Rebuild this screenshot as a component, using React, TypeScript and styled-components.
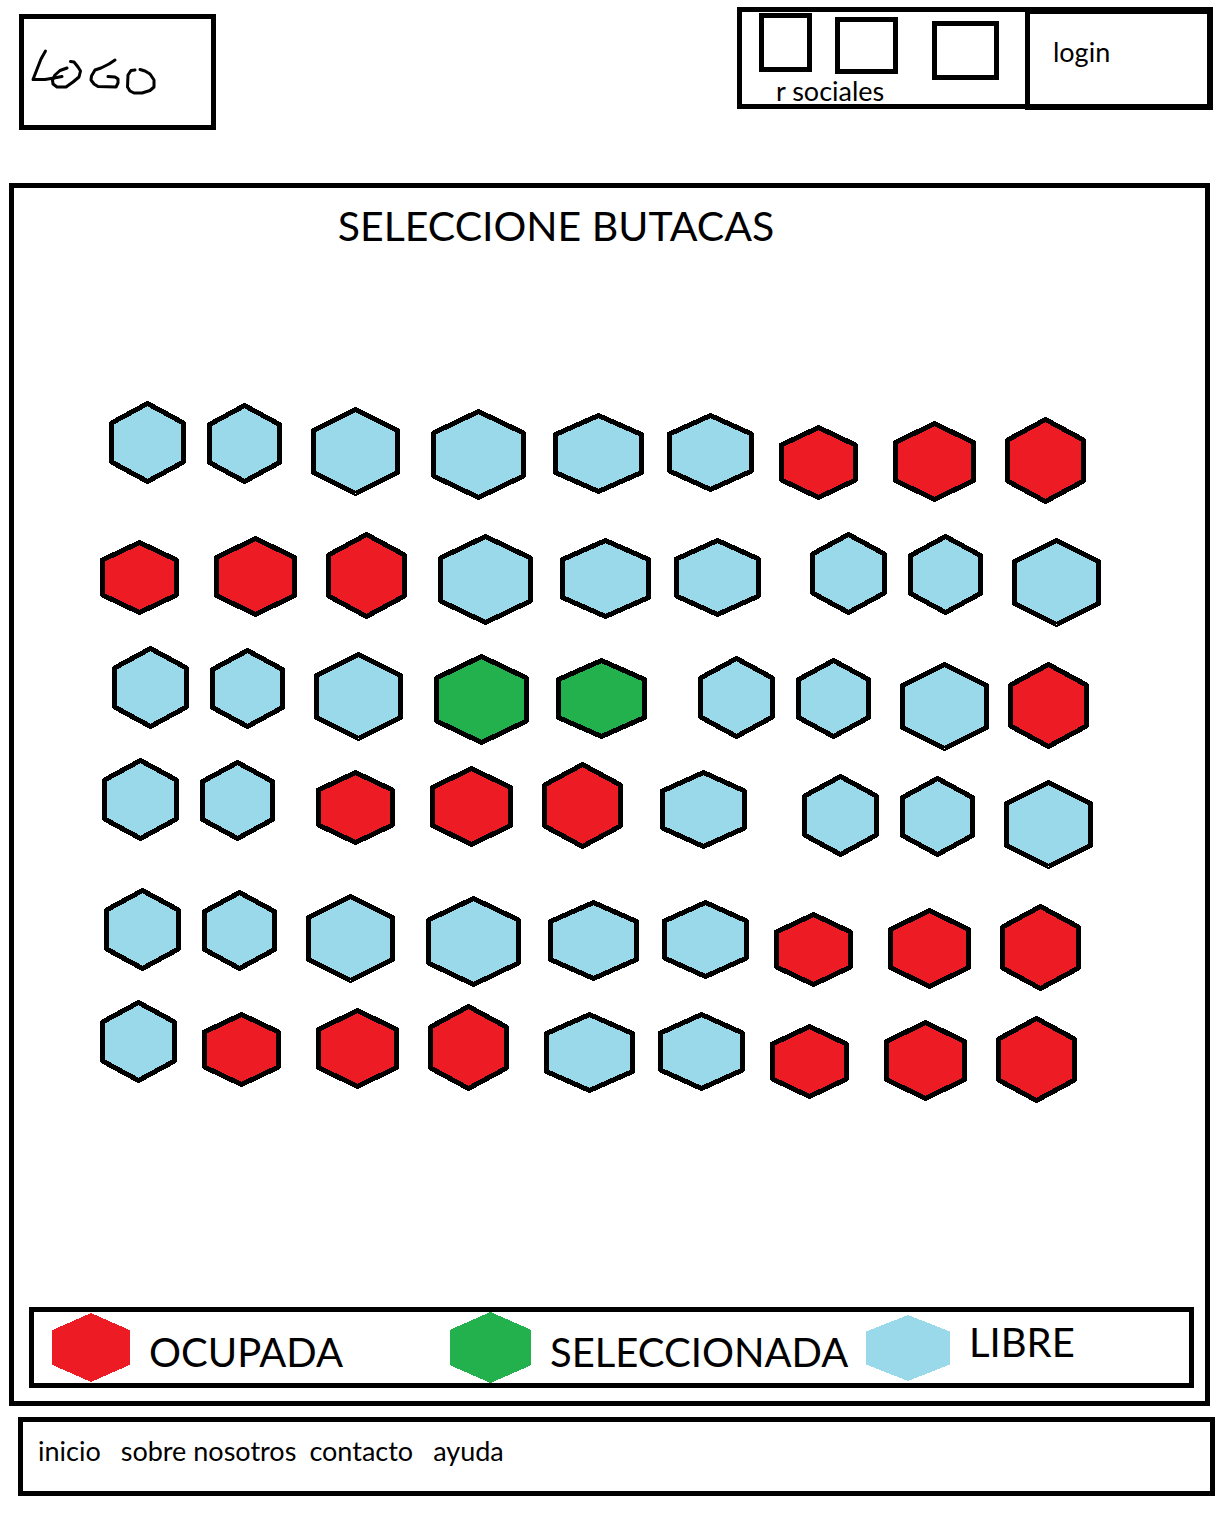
import React, { useState } from "react";
import styled, { createGlobalStyle } from "styled-components";

type Status = "libre" | "ocupada" | "seleccionada";

const FILL: Record<Status, string> = {
  libre: "#99d9ea",
  ocupada: "#ed1c24",
  seleccionada: "#22b14c",
};

const GlobalStyle = createGlobalStyle`
  *, *::before, *::after { box-sizing: border-box; }
  body {
    margin: 0;
    background: #fff;
    color: #000;
    font-family: Lato, "Open Sans", sans-serif;
    font-size: 27px;
    line-height: 28px;
  }
`;

const Page = styled.div`
  display: flex;
  flex-direction: column;
  padding: 7px 7px 18px 9px;
`;

const Header = styled.header`
  display: flex;
  justify-content: space-between;
  align-items: flex-start;
  height: 176px;
  padding: 0 2px 0 10px;
`;

const Logo = styled.a`
  display: block;
  width: 197px;
  height: 116px;
  margin-top: 7px;
  border: 5px solid #000;
`;

const HeaderTools = styled.div`
  display: flex;
  align-items: flex-start;
`;

const Social = styled.section`
  width: 288px;
  height: 102px;
  padding-left: 17px;
  border: 5px solid #000;
  border-right: 0;
`;

const SocialLinks = styled.div`
  display: flex;
  align-items: flex-start;
  height: 65px;
`;

const SocialLink = styled.a<{ $w: number; $h: number; $top: number; $gap: number }>`
  width: ${(p) => p.$w}px;
  height: ${(p) => p.$h}px;
  margin: ${(p) => p.$top}px ${(p) => p.$gap}px 0 0;
  border: 5px solid #000;
`;

const SocialLabel = styled.p`
  margin: 0;
  padding-left: 17px;
`;

const Login = styled.button`
  width: 188px;
  height: 103px;
  padding: 0 0 14px 23px;
  border: solid #000;
  border-width: 7px 6px 6px 5px;
  background: none;
  color: inherit;
  font: inherit;
  text-align: left;
  cursor: pointer;
`;

const Panel = styled.main`
  display: flex;
  flex-direction: column;
  margin-right: 5px;
  padding: 8px 11px 13px 15px;
  border: 5px solid #000;
`;

const Title = styled.h1`
  margin: 0 111px 0 0;
  font-size: 41px;
  font-weight: 400;
  line-height: 60px;
  text-align: center;
`;

const SeatMap = styled.div`
  position: relative;
  height: 702px;
  margin: 145px 0 204px 71px;
`;

const Seat = styled.button<{ $x: number; $y: number }>`
  position: absolute;
  left: ${(p) => p.$x}px;
  top: ${(p) => p.$y}px;
  padding: 0;
  border: 0;
  background: none;
  cursor: pointer;

  &:disabled {
    cursor: not-allowed;
  }
`;

const Shape = styled.svg`
  display: block;
  flex: none;
`;

const Legend = styled.ul`
  display: grid;
  grid-template-columns: 398px 416px 1fr;
  height: 81px;
  margin: 0;
  padding: 0 0 0 18px;
  border: 5px solid #000;
  font-size: 40px;
  line-height: 61px;
  list-style: none;
`;

const LegendItem = styled.li<{ $raised?: boolean }>`
  display: flex;
  align-items: ${(p) => (p.$raised ? "flex-start" : "flex-end")};
  gap: 19px;
`;

const LegendSwatch = styled.span`
  display: flex;
  align-items: center;
  align-self: stretch;
`;

const Footer = styled.footer`
  margin: 11px 0 0 9px;
  padding: 15px 15px 26px;
  border: 5px solid #000;
`;

const FooterNav = styled.nav`
  display: flex;
  flex-wrap: wrap;
  gap: 13px;
`;

const FooterLink = styled.a<{ $spaced?: boolean }>`
  margin-left: ${(p) => (p.$spaced ? 7 : 0)}px;
  color: inherit;
  text-decoration: none;
`;

function Hexagon({ w, h, fill, outline }: { w: number; h: number; fill: string; outline?: boolean }) {
  const o = outline ? 2.5 : 0;
  const q = (h - 2 * o) / 4;
  const points = [
    [w / 2, o],
    [w - o, o + q],
    [w - o, h - o - q],
    [w / 2, h - o],
    [o, h - o - q],
    [o, o + q],
  ];
  return (
    <Shape width={w} height={h} viewBox={`0 0 ${w} ${h}`} shapeRendering="crispEdges" aria-hidden="true">
      <polygon
        points={points.map((p) => p.join(",")).join(" ")}
        fill={fill}
        stroke={outline ? "#000" : "none"}
        strokeWidth={5}
        strokeLinejoin="round"
      />
    </Shape>
  );
}

// Seat models: width and height of each hexagon.
const MODELS = {
  A: [77, 83],
  B: [75, 81],
  C: [89, 89],
  D: [95, 91],
  E: [91, 81],
  F: [87, 79],
  G: [79, 75],
  H: [83, 81],
  I: [81, 87],
} as const;

type Model = keyof typeof MODELS;

// Rows of seats: model and its place on the plan of the room.
const ROWS: [Model, number, number][][] = [
  [["A", 9, 0], ["B", 107, 2], ["C", 211, 6], ["D", 331, 8], ["E", 453, 12], ["F", 567, 12], ["G", 679, 24], ["H", 793, 20], ["I", 905, 16]],
  [["G", 0, 139], ["H", 114, 135], ["I", 226, 131], ["D", 338, 133], ["E", 460, 137], ["F", 574, 137], ["A", 710, 131], ["B", 808, 133], ["C", 912, 137]],
  [["A", 12, 245], ["B", 110, 247], ["C", 214, 251], ["D", 334, 253], ["E", 456, 257], ["A", 598, 255], ["B", 696, 257], ["C", 800, 261], ["I", 908, 261]],
  [["A", 2, 357], ["B", 100, 359], ["G", 216, 369], ["H", 330, 365], ["I", 442, 361], ["F", 560, 369], ["A", 702, 373], ["B", 800, 375], ["C", 904, 379]],
  [["A", 4, 487], ["B", 102, 489], ["C", 206, 493], ["D", 326, 495], ["E", 448, 499], ["F", 562, 499], ["G", 674, 511], ["H", 788, 507], ["I", 900, 503]],
  [["A", 0, 599], ["G", 102, 611], ["H", 216, 607], ["I", 328, 603], ["E", 444, 611], ["F", 558, 611], ["G", 670, 623], ["H", 784, 619], ["I", 896, 615]],
];

const TAKEN: Model[] = ["G", "H", "I"];

export default function App() {
  const [selected, setSelected] = useState<string[]>(["3-4", "3-5"]);

  const toggle = (id: string) =>
    setSelected((ids) => (ids.includes(id) ? ids.filter((i) => i !== id) : [...ids, id]));

  return (
    <>
      <GlobalStyle />
      <Page>
        <Header>
          <Logo href="#" aria-label="Logo">
            <Shape width="187" height="106" viewBox="24 19 187 106" aria-hidden="true">
              <g fill="none" stroke="#000" strokeWidth="3" strokeLinecap="round" strokeLinejoin="round">
                <path d="M45.5 51 L41 59 L33 79.5 L45 79.5 L54 78 L62 76.5" />
                <path d="M67 68 L60 70.5 L55 75 L52.5 80 L53 84 L57 87 L66 87 L73 82 L79 77 L80.500 71 L78 67 L74 62 L70.500 61.500" />
                <path d="M115 60 L109 64 L101 68 L95 70 L91.500 76 L91 80 L94 84 L98 86.500 L116 87 L118 83 L118 79 L115 77 L108 76.500" />
                <path d="M135 70 L131 70.500 L128 75 L127.500 87 L130 91 L134 93 L142 93 L150 90.500 L154 87 L154 80 L150 74 L145 71 L140 69.500" />
              </g>
            </Shape>
          </Logo>
          <HeaderTools>
            <Social>
              <SocialLinks>
                <SocialLink href="#" aria-label="Red social 1" $w={53} $h={59} $top={1} $gap={23} />
                <SocialLink href="#" aria-label="Red social 2" $w={63} $h={57} $top={5} $gap={34} />
                <SocialLink href="#" aria-label="Red social 3" $w={67} $h={59} $top={9} $gap={0} />
              </SocialLinks>
              <SocialLabel>r sociales</SocialLabel>
            </Social>
            <Login type="button">login</Login>
          </HeaderTools>
        </Header>

        <Panel>
          <Title>SELECCIONE BUTACAS</Title>
          <SeatMap role="group" aria-label="Butacas">
            {ROWS.map((row, r) =>
              row.map(([model, x, y], c) => {
                const id = `${r + 1}-${c + 1}`;
                const taken = TAKEN.includes(model);
                const status: Status = taken ? "ocupada" : selected.includes(id) ? "seleccionada" : "libre";
                const [w, h] = MODELS[model];
                return (
                  <Seat
                    key={id}
                    type="button"
                    $x={x}
                    $y={y}
                    disabled={taken}
                    aria-pressed={status === "seleccionada"}
                    aria-label={`Fila ${r + 1}, butaca ${c + 1}, ${status}`}
                    onClick={() => toggle(id)}
                  >
                    <Hexagon w={w} h={h} fill={FILL[status]} outline />
                  </Seat>
                );
              })
            )}
          </SeatMap>
          <Legend>
            <LegendItem>
              <LegendSwatch>
                <Hexagon w={78} h={69} fill={FILL.ocupada} />
              </LegendSwatch>
              OCUPADA
            </LegendItem>
            <LegendItem>
              <LegendSwatch>
                <Hexagon w={81} h={71} fill={FILL.seleccionada} />
              </LegendSwatch>
              SELECCIONADA
            </LegendItem>
            <LegendItem $raised>
              <LegendSwatch>
                <Hexagon w={84} h={66} fill={FILL.libre} />
              </LegendSwatch>
              LIBRE
            </LegendItem>
          </Legend>
        </Panel>

        <Footer>
          <FooterNav>
            <FooterLink href="#inicio">inicio</FooterLink>
            <FooterLink href="#nosotros" $spaced>sobre nosotros</FooterLink>
            <FooterLink href="#contacto">contacto</FooterLink>
            <FooterLink href="#ayuda" $spaced>ayuda</FooterLink>
          </FooterNav>
        </Footer>
      </Page>
    </>
  );
}
